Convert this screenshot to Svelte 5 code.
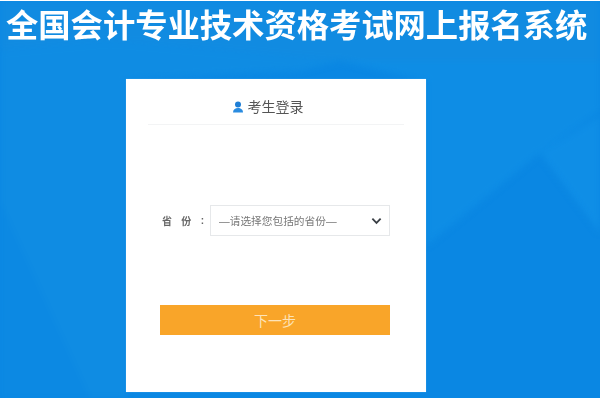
<script lang="ts">
	const title = '全国会计专业技术资格考试网上报名系统';
	const placeholder = '—请选择您包括的省份—';
</script>

<div class="page">
	<svg class="facets" viewBox="0 0 600 397" preserveAspectRatio="none" aria-hidden="true">
		<polygon points="0,0 600,0 600,60 340,60 110,40 0,50" fill="#118be1" />
		<polygon points="0,50 110,40 340,60 300,70 126,79 126,397 0,397" fill="#0f8ce3" />
		<polygon points="340,60 420,79 426,79 426,245 540,152 600,110 600,60" fill="#0e8de5" />
		<polygon points="540,152 600,115 600,232" fill="#0f8ee6" />
		<polygon points="0,200 90,397 0,397" fill="#0c89e3" />
	</svg>

	<h1>{title}</h1>

	<section class="card">
		<header class="card-head">
			<svg class="user" viewBox="0 0 12 12" width="12" height="12" aria-hidden="true">
				<circle cx="6" cy="3.600" r="3" fill="#1f7fd6" />
				<path d="M1 11.500c0-3 2.200-4.600 5-4.600s5 1.600 5 4.600z" fill="#2a8ce0" />
			</svg>
			<span>考生登录</span>
		</header>

		<div class="field">
			<span class="field-label"><span>省</span><span>份</span><span>:</span></span>
			<div class="select">
				<span>{placeholder}</span>
				<svg viewBox="0 0 12 8" width="11" height="8" aria-hidden="true">
					<path d="M1.500 1.500 6 6l4.500-4.500" fill="none" stroke="#3a3f45" stroke-width="2" />
				</svg>
			</div>
		</div>

		<button class="next" type="button">下一步</button>
	</section>
</div>

<style>
	:global(body) {
		background: #fff;
	}

	.page {
		position: relative;
		box-sizing: border-box;
		width: 600px;
		height: 397px;
		margin-top: 1px;
		overflow: hidden;
		background: #0a87e3;
		font-family: "Liberation Sans", "Noto Sans CJK SC", sans-serif;
	}

	.facets {
		position: absolute;
		inset: 0;
		width: 100%;
		height: 100%;
		filter: blur(3px);
	}

	h1 {
		position: relative;
		margin: 0;
		padding: 6px 0 0 6px;
		height: 66px;
		box-sizing: border-box;
		font-size: 32.300px;
		line-height: 38px;
		font-weight: 700;
		color: #fff;
		white-space: nowrap;
		filter: blur(0.6px);
	}

	.card {
		position: relative;
		box-sizing: border-box;
		width: 300px;
		height: 313px;
		margin: 12px 0 0 126px;
		padding: 0 36px 0 34px;
		background: #fff;
		box-shadow: 0 0 1px rgba(190, 225, 250, 0.5);
		display: flex;
		flex-direction: column;
	}

	.card-head {
		box-sizing: border-box;
		height: 46px;
		margin: 0 -14px 0 -12px;
		padding: 9px 17px 0 0;
		border-bottom: 1px solid #f3f4f5;
		display: flex;
		align-items: center;
		justify-content: center;
		gap: 4px;
		font-size: 14px;
		color: #555;
		filter: blur(0.5px);
	}

	.user {
		margin-top: 2px;
	}

	.field {
		margin-top: 80px;
		display: flex;
		align-items: center;
		justify-content: space-between;
	}

	.field-label {
		box-sizing: border-box;
		width: 50px;
		padding: 0 6px 0 2px;
		display: flex;
		align-items: center;
		justify-content: space-between;
		font-size: 10px;
		font-weight: 700;
		color: #666;
		filter: blur(0.5px);
	}

	.select {
		box-sizing: border-box;
		width: 180px;
		height: 31px;
		padding: 0 7px 0 8px;
		border: 1px solid #e6e8ea;
		display: flex;
		align-items: center;
		justify-content: space-between;
		font-size: 10.700px;
		color: #777;
	}

	.select span {
		filter: blur(0.5px);
	}

	.next {
		box-sizing: border-box;
		height: 30px;
		margin-top: 69px;
		padding: 0;
		border: 0;
		background: #f9a529;
		color: #fde3b8;
		font-family: inherit;
		font-size: 14px;
	}
</style>
